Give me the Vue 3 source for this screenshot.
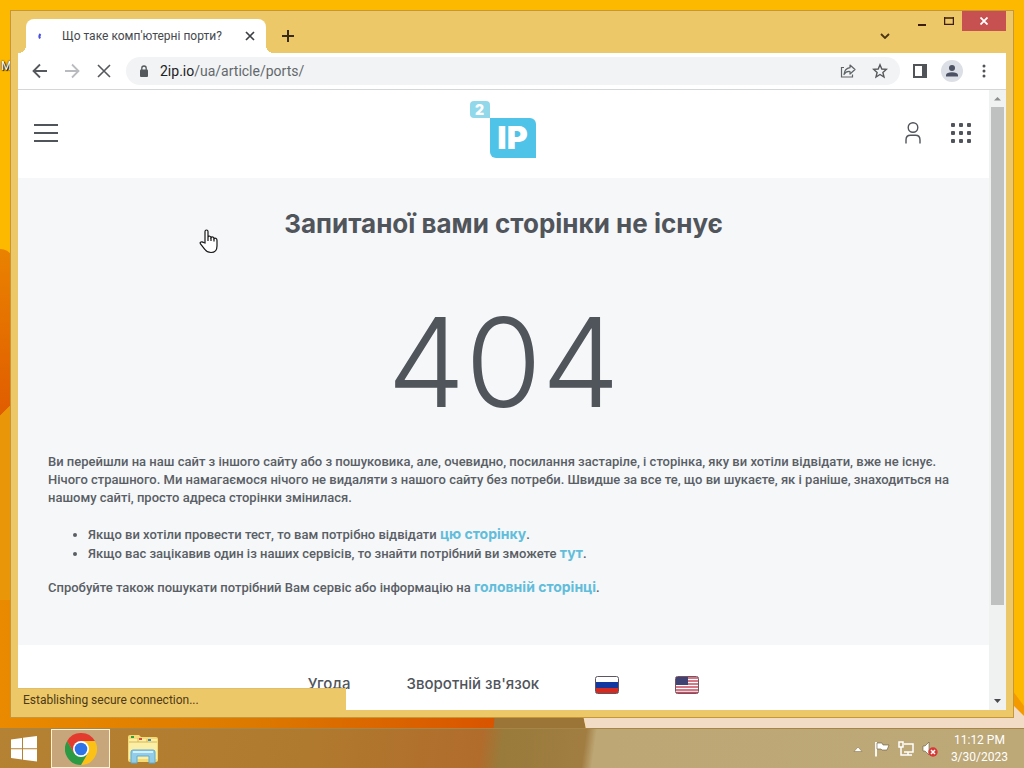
<template>
  <div class="desktop">
    <svg class="wallpaper" viewBox="0 0 1024 768" preserveAspectRatio="none" aria-hidden="true">
      <defs>
        <linearGradient id="leftFlame" x1="0" y1="0" x2="0" y2="1">
          <stop offset="0" stop-color="#ea8200" />
          <stop offset="1" stop-color="#e05c00" />
        </linearGradient>
        <linearGradient id="bottomFlame" x1="0" y1="0" x2="1" y2="0">
          <stop offset="0" stop-color="#e98a00" />
          <stop offset="0.5" stop-color="#dc7a00" />
          <stop offset="1" stop-color="#d95400" />
        </linearGradient>
      </defs>
      <rect width="1024" height="768" fill="#fdb800" />
      <path d="M0 249Q8 249 12 256V404L0 416Z" fill="url(#leftFlame)" />
      <path d="M0 416L12 404V768H0Z" fill="#e99708" />
      <rect y="600" width="496" height="168" fill="url(#bottomFlame)" />
      <path d="M496 700H580L594 768H490Z" fill="#9b7538" />
      <path d="M580 700H1012L1024 712V768H594Z" fill="#f2dcc6" />
      <path d="M1012 690L1024 706V716L1012 704Z" fill="#f39a00" />
    </svg>
    <span class="desktop-label">M</span>

    <div class="window">
      <div class="title-bar">
        <div class="tab">
          <svg class="tab-spinner" viewBox="0 0 16 16" width="16" height="16">
            <path d="M6 10.500Q4.500 8 6.500 6" fill="none" stroke="#4a50e0" stroke-width="2" />
          </svg>
          <span class="tab-title">Що таке комп'ютерні порти?</span>
          <button class="icon-btn tab-close" aria-label="Close tab">
            <svg viewBox="0 0 10 10" width="10" height="10">
              <path d="M1 1L9 9M9 1L1 9" stroke="#3c4043" stroke-width="1.700" />
            </svg>
          </button>
        </div>
        <button class="icon-btn new-tab" aria-label="New tab">
          <svg viewBox="0 0 12 12" width="12" height="12">
            <path d="M6 0V12M0 6H12" stroke="#3a2b16" stroke-width="2" />
          </svg>
        </button>
        <button class="icon-btn tab-search" aria-label="Search tabs">
          <svg viewBox="0 0 10 6" width="10" height="6">
            <path d="M1 1L5 5L9 1" fill="none" stroke="#4a3513" stroke-width="1.800" />
          </svg>
        </button>
        <div class="window-controls">
          <button class="icon-btn minimize" aria-label="Minimize">
            <svg viewBox="0 0 8 10" width="8" height="10"><path d="M0 9H8" stroke="#3d1d10" stroke-width="2" /></svg>
          </button>
          <button class="icon-btn maximize" aria-label="Maximize">
            <svg viewBox="0 0 10 8" width="10" height="8">
              <path d="M0 1H10M0.500 0V8M9.500 0V8M0 7.500H10" fill="none" stroke="#3d1d10" stroke-width="1.500" />
            </svg>
          </button>
          <button class="icon-btn close" aria-label="Close">
            <svg viewBox="0 0 8 8" width="8" height="8"><path d="M0.500 0.500L7.500 7.500M7.500 0.500L0.500 7.500" stroke="#fff" stroke-width="1.800" /></svg>
          </button>
        </div>
      </div>

      <div class="toolbar">
        <div class="nav-group">
          <button class="icon-btn nav-btn" aria-label="Back">
            <svg viewBox="0 0 16 16" width="16" height="16">
              <path d="M15 8H2M8 1.500L1.500 8L8 14.500" fill="none" stroke="#55585c" stroke-width="1.800" />
            </svg>
          </button>
          <button class="icon-btn nav-btn" aria-label="Forward">
            <svg viewBox="0 0 16 16" width="16" height="16">
              <path d="M1 8H14M8 1.500L14.500 8L8 14.500" fill="none" stroke="#b9bbbe" stroke-width="1.800" />
            </svg>
          </button>
          <button class="icon-btn nav-btn" aria-label="Stop loading">
            <svg viewBox="0 0 14 14" width="14" height="14">
              <path d="M1 1L13 13M13 1L1 13" stroke="#55585c" stroke-width="1.600" />
            </svg>
          </button>
        </div>
        <div class="address-bar">
          <svg viewBox="0 0 10 13" width="10" height="13">
            <rect x="1" y="4.500" width="8" height="7.500" rx="1" fill="#55585c" />
            <path d="M2.800 5V3.200a2.200 2.200 0 0 1 4.400 0V5" fill="none" stroke="#55585c" stroke-width="1.300" />
          </svg>
          <span class="url"><b>2ip.io</b>/ua/article/ports/</span>
          <button class="icon-btn" aria-label="Share">
            <svg viewBox="0 0 16 16" width="16" height="16">
              <path d="M4 4.500H1.500V14H12.500V11.500" fill="none" stroke="#606367" stroke-width="1.200" />
              <path d="M10 2L15 6.500L10 11V8.500Q6 8 4 11.500Q4.500 5.500 10 4.700Z" fill="none" stroke="#606367" stroke-width="1.200" stroke-linejoin="round" />
            </svg>
          </button>
          <button class="icon-btn" aria-label="Bookmark this page">
            <svg viewBox="0 0 16 16" width="16" height="16">
              <path d="M8 1.800L9.800 6L14.300 6.400L10.900 9.400L12 14L8 11.500L4 14L5.100 9.400L1.700 6.400L6.200 6Z" fill="none" stroke="#55585c" stroke-width="1.400" />
            </svg>
          </button>
        </div>
        <div class="browser-actions">
          <button class="icon-btn" aria-label="Side panel">
            <svg viewBox="0 0 14 14" width="14" height="14">
              <path d="M0 0H14V14H0ZM2 2V12H9V2Z" fill="#505357" fill-rule="evenodd" />
            </svg>
          </button>
          <button class="icon-btn" aria-label="Profile">
            <svg viewBox="0 0 22 22" width="22" height="22">
              <circle cx="11" cy="11" r="11" fill="#dcdfe6" />
              <circle cx="11" cy="8" r="3" fill="#4c5263" />
              <path d="M5 16.500V15Q5.500 12.300 11 12.300T17 15V16.500Z" fill="#4c5263" />
            </svg>
          </button>
          <button class="icon-btn" aria-label="Menu">
            <svg viewBox="0 0 4 14" width="4" height="14" fill="#505357">
              <circle cx="2" cy="2" r="1.500" />
              <circle cx="2" cy="7" r="1.500" />
              <circle cx="2" cy="12" r="1.500" />
            </svg>
          </button>
        </div>
      </div>

      <div class="viewport">
        <div class="page">
          <header class="site-header">
            <button class="icon-btn" aria-label="Меню">
              <svg viewBox="0 0 24 18" width="24" height="18">
                <path d="M0 1H24M0 9H24M0 17H24" stroke="#50545b" stroke-width="2" />
              </svg>
            </button>
            <a class="logo" href="#" aria-label="2ip">
              <span class="logo-two">2</span>
              <span class="logo-ip">IP</span>
            </a>
            <div class="header-actions">
              <button class="icon-btn" aria-label="Профіль">
                <svg viewBox="0 0 18 24" width="18" height="24">
                  <circle cx="9" cy="6.500" r="4.800" fill="none" stroke="#50545b" stroke-width="1.400" />
                  <path d="M2 22.500V19Q2 14.300 6.500 14.300H11.500Q16 14.300 16 19V22.500" fill="none" stroke="#50545b" stroke-width="1.400" />
                </svg>
              </button>
              <button class="icon-btn" aria-label="Сервіси">
                <svg viewBox="0 0 20 20" width="20" height="20" fill="#50545b">
                  <rect v-for="dot in dots" :key="dot.x + '-' + dot.y" :x="dot.x" :y="dot.y" width="4" height="4" rx="1" />
                </svg>
              </button>
            </div>
          </header>

          <main class="not-found">
            <h1>Запитаної вами сторінки не існує</h1>
            <div class="code">404</div>
            <p>
              Ви перейшли на наш сайт з іншого сайту або з пошуковика, але, очевидно, посилання застаріле, і сторінка, яку ви хотіли відвідати, вже не існує.<br />
              Нічого страшного. Ми намагаємося нічого не видаляти з нашого сайту без потреби. Швидше за все те, що ви шукаєте, як і раніше, знаходиться на<br />
              нашому сайті, просто адреса сторінки змінилася.
            </p>
            <ul>
              <li>Якщо ви хотіли провести тест, то вам потрібно відвідати <a href="#">цю сторінку</a>.</li>
              <li>Якщо вас зацікавив один із наших сервісів, то знайти потрібний ви зможете <a href="#">тут</a>.</li>
            </ul>
            <p>Спробуйте також пошукати потрібний Вам сервіс або інформацію на <a href="#">головній сторінці</a>.</p>
          </main>

          <footer class="site-footer">
            <a href="#">Угода</a>
            <a href="#">Зворотній зв'язок</a>
            <a href="#" aria-label="Русский">
              <svg viewBox="0 0 24 18" width="24" height="18">
                <rect x="0.500" y="0.500" width="23" height="17" rx="2" fill="#fff" />
                <path d="M1 6H23V12H1Z" fill="#1238a0" />
                <path d="M1 12H23V17H1Z" fill="#d42a20" />
                <rect x="0.500" y="0.500" width="23" height="17" rx="2" fill="none" stroke="#5d5560" />
              </svg>
            </a>
            <a href="#" aria-label="English">
              <svg viewBox="0 0 24 18" width="24" height="18">
                <rect x="0.500" y="0.500" width="23" height="17" rx="2" fill="#fff" />
                <path d="M1 2H23M1 5H23M1 8H23M1 11H23M1 14H23M1 16.500H23" stroke="#c64c62" stroke-width="1.300" />
                <path d="M1 1H13V9H1Z" fill="#3f4272" />
                <rect x="0.500" y="0.500" width="23" height="17" rx="2" fill="none" stroke="#75535f" />
              </svg>
            </a>
          </footer>
        </div>
        <div class="scrollbar">
          <svg viewBox="0 0 17 17" width="17" height="17"><path d="M5 10.500L8.500 7L12 10.500Z" fill="#8b8e8e" /></svg>
          <div class="scroll-track"><div class="scroll-thumb"></div></div>
          <svg viewBox="0 0 17 17" width="17" height="17"><path d="M5 6L8.500 10L12 6Z" fill="#484b4d" /></svg>
        </div>
        <div class="status-bubble">Establishing secure connection...</div>
      </div>
    </div>

    <div class="taskbar">
      <button class="icon-btn start" aria-label="Start">
        <svg viewBox="0 0 28 28" width="28" height="28" fill="#fff">
          <path d="M1 4.500L12 3V13.300H1ZM13 2.800L27 1V13.300H13ZM1 14.300H12V24.500L1 23ZM13 14.300H27V26.500L13 24.700Z" />
        </svg>
      </button>
      <button class="icon-btn task active" aria-label="Google Chrome">
        <svg viewBox="0 0 32 32" width="32" height="32">
          <path d="M16 16L2.140 8A16 16 0 0 1 29.860 8Z" fill="#e33b2e" />
          <path d="M16 16L29.860 8A16 16 0 0 1 16 32L22.900 20Z" fill="#fbc116" />
          <path d="M16 32A16 16 0 0 1 2.140 8L9.100 20L16 24L22.900 20Z" fill="#2b9a43" />
          <path d="M16 8H29.860L22.900 20Z" fill="#fbc116" />
          <path d="M2.140 8L9.100 20L16 8Z" fill="#e33b2e" />
          <circle cx="16" cy="16" r="8" fill="#fff" />
          <circle cx="16" cy="16" r="6.300" fill="#2e74e8" />
        </svg>
      </button>
      <button class="icon-btn task" aria-label="File Explorer">
        <svg viewBox="0 0 32 30" width="32" height="30">
          <path d="M1 3Q1 1 3 1H12L14 3H29Q31 3 31 5V26Q31 28 29 28H3Q1 28 1 26Z" fill="#f5da74" />
          <path d="M2 5H30V25H2Z" fill="#fbeea6" />
          <path d="M2 8H30M11 4V8M20 5V8" stroke="#dcb750" />
          <path d="M4 2H7V4H4Z" fill="#2f9f38" />
          <path d="M12 4H15V6H12Z" fill="#d34c43" />
          <path d="M21 5H24V7H21Z" fill="#3b8ab5" />
          <path d="M4 29V18Q4 16 6 16H26Q28 16 28 18V29H22V22H10V29Z" fill="#91cdea" stroke="#5eacd3" />
          <path d="M6 18H26" stroke="#d5f0fb" stroke-width="2" />
        </svg>
      </button>
      <div class="tray">
        <svg viewBox="0 0 16 16" width="16" height="16"><path d="M4 10.500L8 6L12 10.500Z" fill="#fff" stroke="#7c6844" stroke-width="0.500" /></svg>
        <svg viewBox="0 0 16 16" width="16" height="16">
          <path d="M2 1V15.500" stroke="#fff" stroke-width="1.800" />
          <path d="M3 2H8L9 4H15L13 9H8L7 8H3Z" fill="#fff" stroke="#67563a" stroke-width="0.600" />
        </svg>
        <svg viewBox="0 0 16 16" width="16" height="16" fill="none" stroke="#fff" stroke-width="1.500">
          <path d="M6 3H15V11H6M10 11V14M6 14H14M3 6V14H6M1 1H5V6H1Z" />
        </svg>
        <svg viewBox="0 0 16 16" width="16" height="16">
          <path d="M1 5H3L7 1V14L3 10H1Z" fill="#fff" stroke="#67563a" stroke-width="0.600" />
          <circle cx="11" cy="11" r="4.700" fill="#d53a38" />
          <path d="M9 9L13 13M13 9L9 13" stroke="#fff" stroke-width="1.500" />
        </svg>
        <div class="clock">
          <span>11:12 PM</span>
          <span>3/30/2023</span>
        </div>
      </div>
    </div>

    <svg class="cursor" viewBox="0 0 20 25" width="20" height="25">
      <path
        d="M6 14V2.500Q6 1 7.500 1T9 2.500V8Q9.500 6.700 11 7.300Q12 7.600 12 8.500Q13 7.300 14.300 8.200Q15 8.700 15 9.500Q16 8.600 17.200 9.500Q18 10 18 11.500V17Q18 23.500 12 23.500Q8 23.500 6 20.500L1.500 15Q0.500 13.500 2 13T4.500 13.500Z"
        fill="#fff"
        stroke="#161616"
        stroke-width="1.200"
      />
      <path d="M9 8V12M12 8.500V12M15 9.500V12.500" stroke="#161616" stroke-width="1.200" />
    </svg>
  </div>
</template>

<script setup>
// 3x3 grid for the services icon
const dots = []
for (const y of [0, 8, 16]) {
  for (const x of [0, 8, 16]) {
    dots.push({ x, y })
  }
}
</script>

<style>
body {
  overflow: hidden;
}
</style>

<style scoped>
* {
  box-sizing: border-box;
}

.desktop {
  position: relative;
  display: flex;
  flex-direction: column;
  height: 100vh;
  overflow: hidden;
  font-family: Roboto, 'Open Sans', sans-serif;
}

svg {
  display: block;
  flex-shrink: 0;
}

.wallpaper {
  position: absolute;
  inset: 0;
  width: 100%;
  height: 100%;
}

.desktop-label {
  position: absolute;
  left: 1px;
  top: 59px;
  color: #fff;
  font-size: 12px;
  text-shadow: 1px 1px 1px #000, 0 0 2px #000;
}

.icon-btn {
  display: flex;
  align-items: center;
  justify-content: center;
  flex-shrink: 0;
  padding: 0;
  border: none;
  background: none;
  cursor: pointer;
}

/* Browser window */
.window {
  position: relative;
  flex: 1;
  min-height: 0;
  display: flex;
  flex-direction: column;
  margin: 10px;
  padding: 0 7px 7px;
  background: #edc868;
  border: 1px solid #c69638;
}

.title-bar {
  display: flex;
  align-items: flex-end;
  height: 42px;
  padding-left: 8px;
}

.tab {
  position: relative;
  display: flex;
  align-items: center;
  width: 240px;
  height: 34px;
  padding: 0 10px 0 8px;
  background: #fff;
  border-radius: 8px 8px 0 0;
}

.tab::before,
.tab::after {
  content: '';
  position: absolute;
  bottom: 0;
  width: 8px;
  height: 8px;
}

.tab::before {
  left: -8px;
  background: radial-gradient(circle at 0 0, transparent 8px, #fff 8px);
}

.tab::after {
  right: -8px;
  background: radial-gradient(circle at 100% 0, transparent 8px, #fff 8px);
}

.tab-title {
  flex: 1;
  margin-left: 12px;
  font-size: 12px;
  color: #45494d;
  white-space: nowrap;
}

.tab-close {
  width: 12px;
  height: 16px;
}

.new-tab {
  width: 28px;
  height: 34px;
  margin-left: 8px;
}

.tab-search {
  width: 28px;
  height: 34px;
  margin-left: auto;
}

.window-controls {
  display: flex;
  align-self: flex-start;
  margin-left: 9px;
}

.minimize,
.maximize {
  width: 27px;
  height: 20px;
}

.close {
  width: 44px;
  height: 20px;
  background: #c75050;
}

.toolbar {
  display: flex;
  align-items: center;
  height: 37px;
  padding: 0 10px 0 14px;
  background: #fff;
  border-bottom: 1px solid #d5d6d8;
}

.nav-group {
  display: flex;
  gap: 16px;
}

.nav-btn {
  width: 16px;
  height: 16px;
}

.address-bar {
  flex: 1;
  display: flex;
  align-items: center;
  gap: 16px;
  height: 28px;
  margin: 0 8px 0 14px;
  padding: 0 12px 0 13px;
  border-radius: 14px;
  background: #f1f3f4;
}

.url {
  flex: 1;
  margin-left: -5px;
  font-size: 14px;
  color: #64686c;
}

.url b {
  font-weight: 400;
  color: #202124;
}

.browser-actions {
  display: flex;
  align-items: center;
  gap: 8px;
}

.browser-actions .icon-btn {
  width: 24px;
  height: 24px;
}

/* Page */
.viewport {
  position: relative;
  flex: 1;
  min-height: 0;
  display: flex;
  overflow: hidden;
  background: #fff;
}

.page {
  flex: 1;
  min-width: 0;
  color: #50545b;
  font-family: Inter, 'Open Sans', sans-serif;
}

.site-header {
  display: grid;
  grid-template-columns: 1fr auto 1fr;
  align-items: center;
  height: 88px;
  padding: 0 18px 2px 16px;
}

.site-header > .icon-btn {
  justify-self: start;
}

.logo {
  display: grid;
  grid-template-columns: 20px 46px;
  grid-template-rows: 17px 40px;
  margin-top: -8px;
  color: #fff;
  text-decoration: none;
  font-weight: 900;
}

.logo-two {
  display: flex;
  align-items: center;
  justify-content: center;
  background: #91d8ea;
  border-radius: 4px 4px 0 4px;
  font-size: 14px;
}

.logo-ip {
  grid-area: 2 / 2;
  display: flex;
  align-items: center;
  justify-content: center;
  background: #50c4e8;
  border-radius: 0 6px 0 6px;
  font-size: 32px;
}

.header-actions {
  display: flex;
  align-items: center;
  justify-content: flex-end;
  gap: 29px;
}

.not-found {
  padding: 31px 30px 30px;
  background: #f5f7f9;
  font-family: Roboto, 'Open Sans', sans-serif;
  font-size: 13px;
  line-height: 18px;
  font-weight: 500;
}

.not-found h1 {
  margin: 0;
  text-align: center;
  font-family: Inter, sans-serif;
  font-size: 26px;
  line-height: 30px;
  font-weight: 700;
}

.code {
  margin: 49px 0 17px;
  text-align: center;
  font-family: Inter, sans-serif;
  font-size: 124px;
  line-height: 148px;
  font-weight: 300;
}

.not-found p {
  margin: 0 0 18px;
  color: #5a5e65;
  white-space: nowrap;
}

.not-found ul {
  margin: 0 0 16px;
  padding-left: 40px;
  color: #5a5e65;
  line-height: 19px;
}

.not-found a {
  color: #62bddb;
  font-family: Inter, sans-serif;
  font-size: 14px;
  line-height: 14px;
  font-weight: 700;
  text-decoration: none;
}

.site-footer {
  display: flex;
  align-items: flex-end;
  justify-content: center;
  gap: 56px;
  padding: 29px 0;
  font-size: 15px;
  line-height: 20px;
  font-weight: 500;
}

.site-footer a {
  color: inherit;
  text-decoration: none;
}

/* Scrollbar */
.scrollbar {
  display: flex;
  flex-direction: column;
  width: 17px;
  background: #f0f1f1;
}

.scroll-track {
  flex: 1;
  padding: 0 2px;
}

.scroll-thumb {
  height: 85%;
  background: #bfc1c1;
}

.status-bubble {
  position: absolute;
  left: 0;
  bottom: 0;
  width: 328px;
  padding: 2px 5px 0;
  background: #edc868;
  border-top: 1px solid #dfbd69;
  color: #4d3a16;
  font-size: 12px;
  line-height: 19px;
}

/* Taskbar */
.taskbar {
  position: relative;
  display: flex;
  align-items: center;
  height: 40px;
  background: linear-gradient(98deg, #b58132 0%, #b07a2e 30%, #b16c2c 47%, #997b3b 49%, #a17d42 57%, #bda775 58%, #bda878 100%);
  border-top: 1px solid #a58548;
}

.start {
  width: 51px;
  height: 39px;
  padding-right: 3px;
}

.task {
  width: 59px;
  height: 39px;
  margin-right: 3px;
}

.task.active {
  border: 1px solid #fff1cf;
  background: #c6a67a;
}

.tray {
  display: flex;
  align-items: center;
  gap: 8px;
  margin-left: auto;
  padding-right: 16px;
}

.clock {
  display: flex;
  flex-direction: column;
  align-items: center;
  margin-left: 5px;
  color: #fff;
  font-size: 12px;
  line-height: 17px;
}

.cursor {
  position: absolute;
  left: 199px;
  top: 229px;
}
</style>
